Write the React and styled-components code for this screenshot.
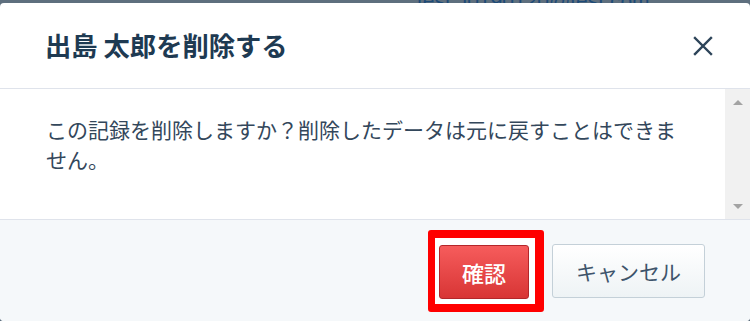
import React from "react";
import styled, { createGlobalStyle } from "styled-components";

const GlobalStyle = createGlobalStyle`
  html, body {
    margin: 0;
    padding: 0;
    background: #5e6f7e;
    font-family: "Noto Sans CJK JP", "Noto Sans", "Liberation Sans", sans-serif;
  }
  #root { height: 321px; }
`;

const Page = styled.div`
  width: 750px;
  height: 321px;
  display: flex;
  flex-direction: column;
  overflow: hidden;
`;

const Backdrop = styled.div`
  height: 3px;
  flex: 0 0 3px;
  overflow: hidden;
  display: flex;
  align-items: flex-end;
  padding-left: 417px;
`;

const BackdropText = styled.span`
  font-family: "Liberation Sans", sans-serif;
  font-size: 21px;
  line-height: 4px;
  color: #1d4a77;
  white-space: nowrap;
`;

const Dialog = styled.div`
  flex: 1;
  background: #ffffff;
  border-radius: 4px;
  display: flex;
  flex-direction: column;
  overflow: hidden;
`;

const Header = styled.header`
  height: 85px;
  flex: 0 0 85px;
  border-bottom: 1px solid #dfe3eb;
  display: flex;
  align-items: center;
  justify-content: space-between;
  padding: 0 37px 0 45px;
`;

const Title = styled.h1`
  margin: 0;
  font-size: 26.3px;
  font-weight: 700;
  color: #1e3a52;
  line-height: 1.3;
`;

const CloseButton = styled.button`
  width: 20px;
  height: 20px;
  padding: 0;
  border: none;
  background: none;
  display: flex;
  align-items: center;
  justify-content: center;
  cursor: pointer;
`;

const Body = styled.section`
  height: 130px;
  flex: 0 0 130px;
  display: flex;
`;

const BodyContent = styled.div`
  flex: 1;
  padding: 25px 0 0 46px;
`;

const Message = styled.p`
  margin: 0;
  width: 640px;
  font-size: 21px;
  line-height: 30px;
  color: #33475b;
`;

const ScrollTrack = styled.div`
  width: 25px;
  background: #f1f1f1;
  display: flex;
  flex-direction: column;
  justify-content: space-between;
  align-items: center;
  padding: 11px 0 10px;
  box-sizing: border-box;
`;

const Arrow = styled.span`
  width: 0;
  height: 0;
  border-left: 5px solid transparent;
  border-right: 5px solid transparent;
  ${(p) =>
    p.$down
      ? "border-top: 5px solid #a3a3a3;"
      : "border-bottom: 5px solid #a3a3a3;"}
`;

const Footer = styled.footer`
  flex: 1;
  background: #f5f8fa;
  border-top: 1px solid #dfe3eb;
  display: flex;
  align-items: center;
  justify-content: flex-end;
  gap: 8px;
  padding: 0 45px 0 0;
`;

const Highlight = styled.span`
  display: inline-flex;
  border-style: solid;
  border-color: #ff0000;
  border-width: 8px 9px 8px 7px;
  border-radius: 3px;
  padding: 7px 6px 5px 4px;
  background: #ffffff;
`;

const Button = styled.button`
  height: 54px;
  box-sizing: border-box;
  border-radius: 3px;
  font-family: "Noto Sans CJK JP", sans-serif;
  font-size: 21px;
  cursor: pointer;
  display: flex;
  align-items: center;
  justify-content: center;
  padding: 0;
  ${(p) =>
    p.$primary
      ? `
    width: 90px;
    color: #ffffff;
    font-weight: 500;
    font-size: 22px;
    border: 1px solid #b4262a;
    background: linear-gradient(to bottom, #f65c5c 0%, #d83535 100%);
  `
      : `
    width: 153px;
    color: #3e546b;
    font-weight: 400;
    border: 1px solid #c4d0d8;
    background: linear-gradient(to bottom, #ffffff 0%, #eef3f5 100%);
  `}
`;

export default function App() {
  return (
    <>
      <GlobalStyle />
      <Page>
        <Backdrop>
          <BackdropText>test.J0190120@test.com</BackdropText>
        </Backdrop>
        <Dialog>
          <Header>
            <Title>出島 太郎を削除する</Title>
            <CloseButton aria-label="閉じる">
              <svg width="20" height="20" viewBox="0 0 20 20">
                <path
                  d="M2 2 L18 18 M18 2 L2 18"
                  stroke="#2d4459"
                  strokeWidth="2.4"
                  strokeLinecap="square"
                  fill="none"
                />
              </svg>
            </CloseButton>
          </Header>
          <Body>
            <BodyContent>
              <Message>
                この記録を削除しますか？削除したデータは元に戻すことはできません。
              </Message>
            </BodyContent>
            <ScrollTrack>
              <Arrow />
              <Arrow $down />
            </ScrollTrack>
          </Body>
          <Footer>
            <Highlight>
              <Button $primary>確認</Button>
            </Highlight>
            <Button>キャンセル</Button>
          </Footer>
        </Dialog>
      </Page>
    </>
  );
}
